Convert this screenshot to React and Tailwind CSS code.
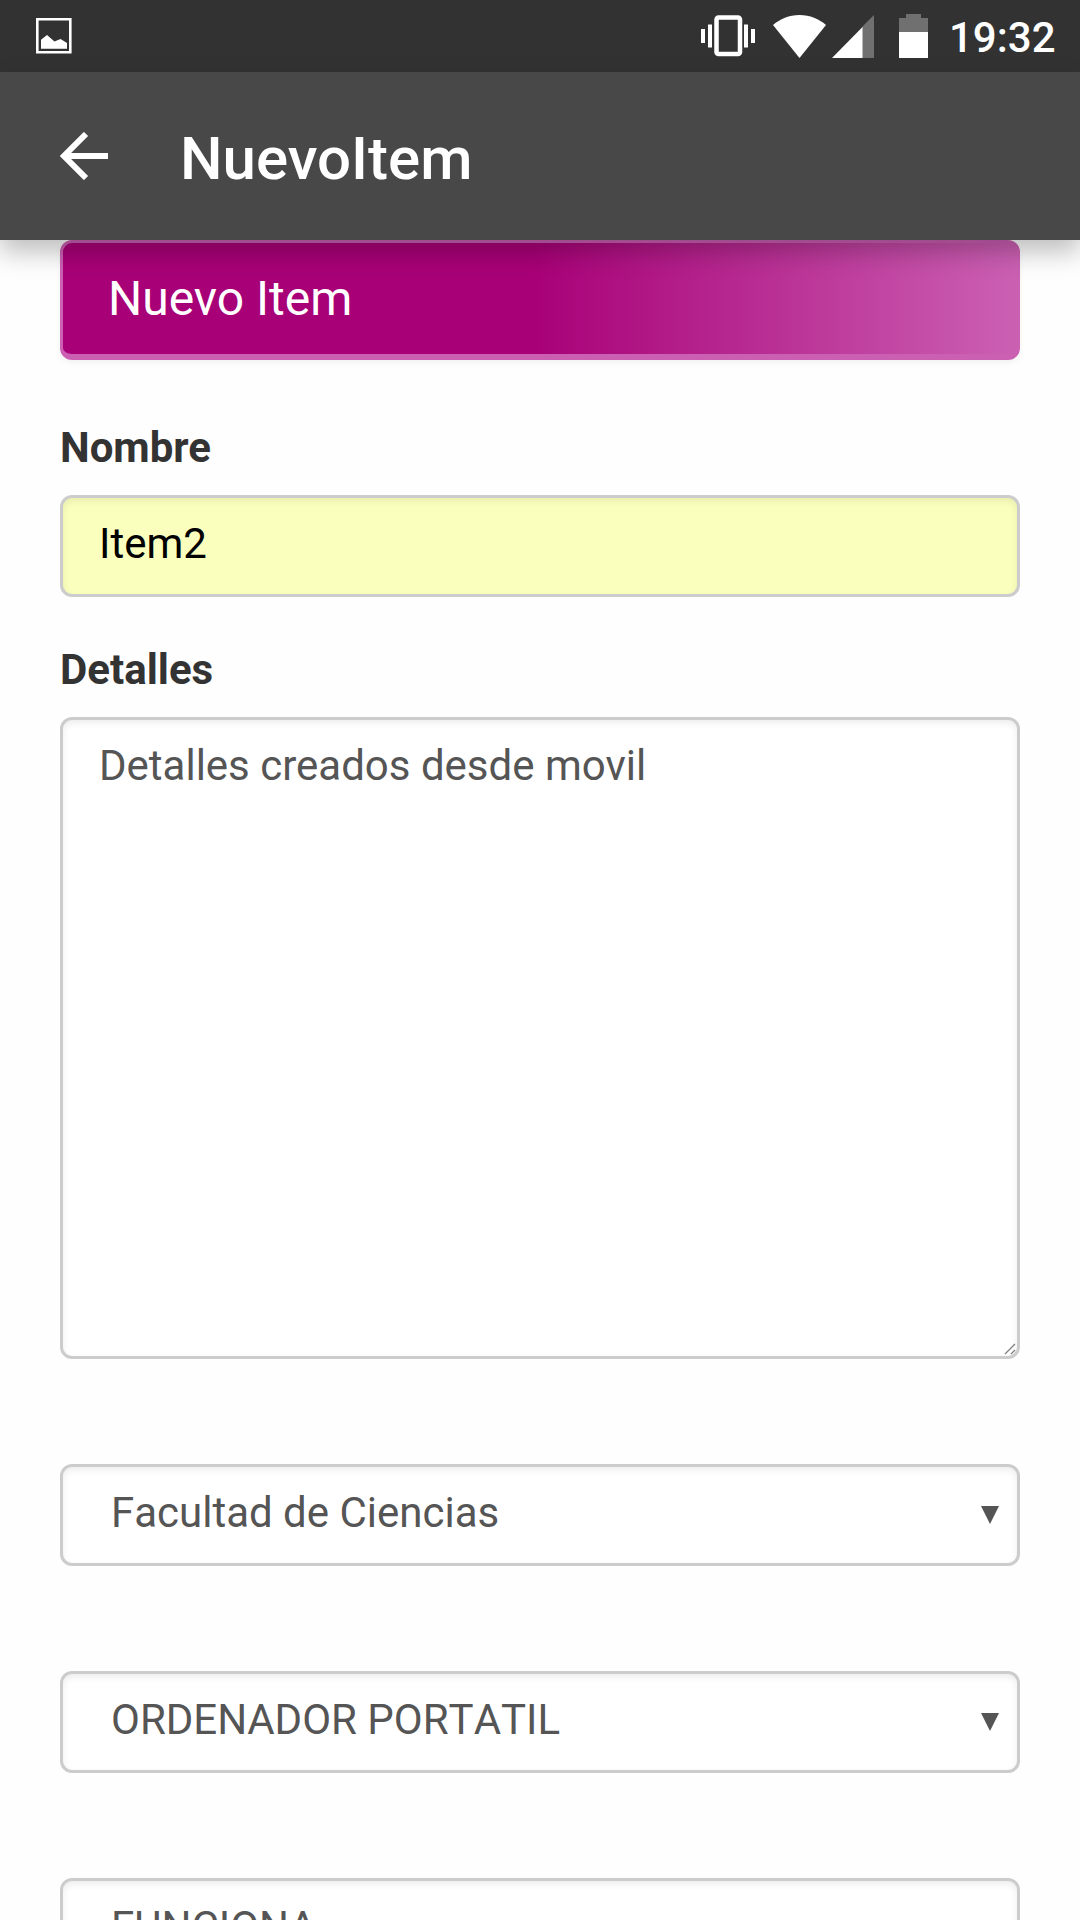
function PhotoIcon() {
  return (
    <svg className="h-9 w-9" viewBox="0 0 36 36">
      <path fill="#fff" fillRule="evenodd" d="M0 0H35.600V35.600H0ZM2.600 2.600V33H33V2.600Z" />
      <path fill="#fff" d="M5 30.700V21.700L11 17L18.500 23.500L24.500 21L31 25V30.700Z" />
    </svg>
  );
}

function VibrateIcon() {
  return (
    <svg className="h-[42px] w-[54px]" viewBox="0 0 54 42">
      <rect x="15.500" y="2.500" width="23.500" height="36.500" rx="2" fill="none" stroke="#fff" strokeWidth="4.500" />
      <path fill="#fff" d="M0 14h4v14H0zM7 9.500h4v23H7zM43 9.500h4v23h-4zM50 14h4v14h-4z" />
    </svg>
  );
}

function WifiIcon() {
  return (
    <svg className="ml-[18px] h-[43px] w-[53px]" viewBox="0 0 53 43">
      <path fill="#fff" d="M26.500 43L0 10C7 4 16 0 26.500 0S46 4 53 10Z" />
    </svg>
  );
}

function SignalIcon() {
  return (
    <svg className="ml-[6px] h-[43px] w-[42px]" viewBox="0 0 42 43">
      <path fill="#707070" d="M42 0V43H30V12Z" />
      <path fill="#fff" d="M0 43L30.500 12V43Z" />
    </svg>
  );
}

function BatteryIcon() {
  return (
    <svg className="ml-[25px] h-[44px] w-[29px]" viewBox="0 0 29 44">
      <path fill="#707070" d="M7 0H22V4H29V18H0V4H7Z" />
      <path fill="#fff" d="M0 18H29V44H0Z" />
    </svg>
  );
}

function Field({ children, className = "" }) {
  return (
    <div
      className={
        "w-full rounded-[12px] border-[3px] border-[#ccc] px-9 pt-4 text-[42px] leading-[60px] shadow-[inset_0_3px_7px_rgba(0,0,0,0.075)] " +
        className
      }
    >
      {children}
    </div>
  );
}

function Select({ children }) {
  return (
    <Field className="flex h-[102px] shrink-0 justify-between bg-white pr-[18px] pl-12 text-[#555] [font-kerning:none]">
      <span>{children}</span>
      <svg className="mt-[23px] h-[18px] w-[18px]" viewBox="0 0 18 18">
        <path fill="#555" d="M0 0H18L9 18Z" />
      </svg>
    </Field>
  );
}

export default function App() {
  return (
    <div className="flex h-[1920px] w-[1080px] flex-col overflow-hidden bg-[#fefefe] font-['Roboto',sans-serif]">
      <div className="flex h-[72px] shrink-0 items-center justify-between bg-[#323232] pr-6 pl-9">
        <PhotoIcon />
        <div className="flex items-center">
          <VibrateIcon />
          <WifiIcon />
          <SignalIcon />
          <BatteryIcon />
          <span className="ml-[21px] w-[107px] pt-1 text-[42px] leading-[68px] font-medium whitespace-nowrap text-white">19:32</span>
        </div>
      </div>
      <header className="relative z-10 flex h-[168px] shrink-0 items-center bg-[#484848] pl-[60px] shadow-[0_12px_24px_rgba(0,0,0,0.25)]">
        <svg className="h-12 w-12" viewBox="0 0 48 48">
          <path fill="none" stroke="#fff" strokeWidth="6" d="M48 24H5M26 2L4 24L26 46" />
        </svg>
        <h1 className="ml-[72px] pt-1.5 text-[60px] leading-[70px] font-medium text-white">NuevoItem</h1>
      </header>
      <main className="flex flex-col px-[60px]">
        <div className="h-[120px] rounded-[12px] border-[3px] border-b-[6px] border-[#cb60b3] bg-linear-to-r/srgb from-[#a80077] from-49% to-[#cb60b3] pt-5 pl-[45px] text-[48px] leading-[72px] text-white shadow-[0_3px_6px_rgba(0,0,0,0.05)]">
          Nuevo Item
        </div>
        <label className="mt-[58px] text-[42px] leading-[60px] font-bold text-[#333]">Nombre</label>
        <Field className="mt-[17px] h-[102px] bg-[#faffbd] text-black">Item2</Field>
        <label className="mt-[43px] text-[42px] leading-[60px] font-bold text-[#333]">Detalles</label>
        <Field className="relative mt-[17px] h-[642px] bg-white text-[#555]">
          Detalles creados desde movil
          <svg className="absolute right-[1px] bottom-[1px] h-3 w-3" viewBox="0 0 12 12">
            <path stroke="#808080" strokeWidth="1.300" d="M1 11L11 1M7 11L11 7" />
          </svg>
        </Field>
        <div className="mt-[105px] flex flex-col gap-[105px]">
          <Select>Facultad de Ciencias</Select>
          <Select>ORDENADOR PORTATIL</Select>
          <Select>FUNCIONA</Select>
        </div>
      </main>
    </div>
  );
}
